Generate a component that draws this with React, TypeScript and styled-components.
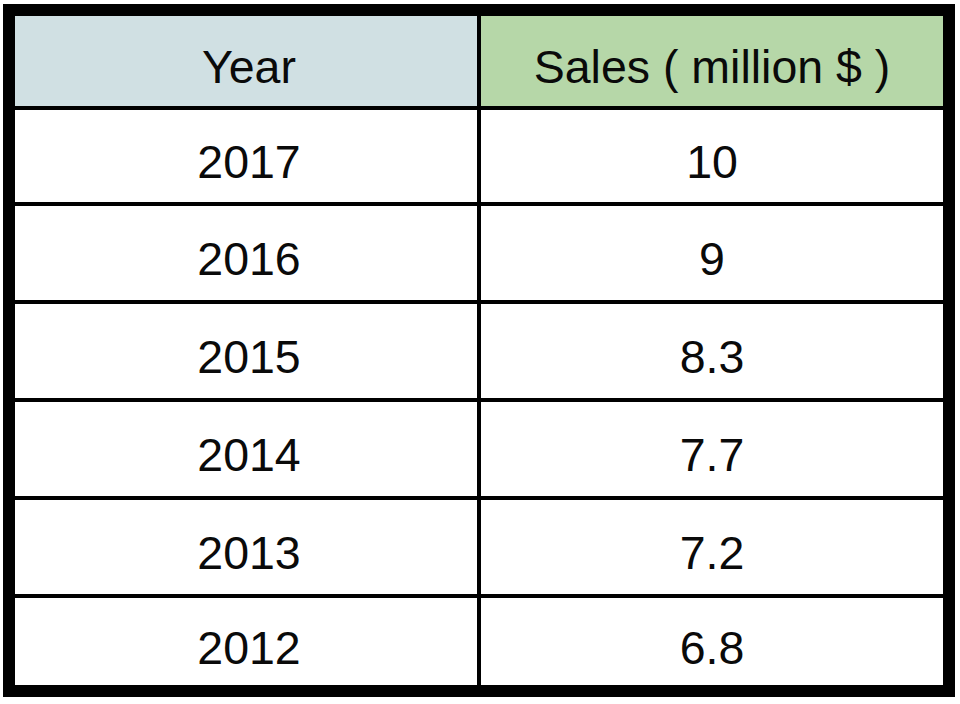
import { Fragment } from 'react';
import styled, { createGlobalStyle } from 'styled-components';

const rows = [
  { year: '2017', sales: '10' },
  { year: '2016', sales: '9' },
  { year: '2015', sales: '8.3' },
  { year: '2014', sales: '7.7' },
  { year: '2013', sales: '7.2' },
  { year: '2012', sales: '6.8' },
];

const GlobalStyle = createGlobalStyle`
  html, body {
    margin: 0;
    background: #ffffff;
  }
  body {
    font-family: 'Liberation Sans', Arial, sans-serif;
  }
`;

const Page = styled.div`
  width: 960px;
  height: 704px;
  padding: 4px 0 0 3px;
  box-sizing: border-box;
`;

const Table = styled.div`
  display: grid;
  grid-template-columns: 462px 462px;
  grid-template-rows: 90px 92px 94px 94px 94px 94px 87px;
  gap: 4px;
  width: 952px;
  box-sizing: border-box;
  border: 12px solid #000;
  background: #000;
`;

const Cell = styled.div<{ $bg?: string; $shift?: number }>`
  display: flex;
  align-items: center;
  justify-content: center;
  padding: 14px 0 0 ${({ $shift }) => ($shift ?? 0) * 2}px;
  box-sizing: border-box;
  background: ${({ $bg }) => $bg ?? '#ffffff'};
  color: #0a0a0a;
  font-size: 46.5px;
  line-height: 1.15;
`;

export default function App() {
  return (
    <>
      <GlobalStyle />
      <Page>
        <Table>
          <Cell $bg="#d0e0e3" $shift={3}>Year</Cell>
          <Cell $bg="#b6d7a8">Sales ( million $ )</Cell>
          {rows.map((r) => (
            <Fragment key={r.year}>
              <Cell $shift={3}>{r.year}</Cell>
              <Cell>{r.sales}</Cell>
            </Fragment>
          ))}
        </Table>
      </Page>
    </>
  );
}
